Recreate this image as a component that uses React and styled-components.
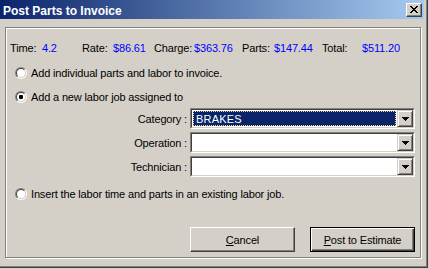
import React from 'react';
import styled, { createGlobalStyle } from 'styled-components';

const GlobalStyle = createGlobalStyle`
  html, body {
    margin: 0;
    padding: 0;
    background: #D4D0C8;
  }
  body {
    font-family: "Liberation Sans", Arial, sans-serif;
    font-size: 11px;
    letter-spacing: -0.15px;
    color: #000;
  }
`

const Window = styled.div`
  width: 424px;
  padding: 0 3px 3px 0;
  border-right: 1px solid #404040;
  border-bottom: 1px solid #404040;
  box-shadow: inset -1px -1px 0 #808080;
  background: #D4D0C8;
`

const TitleBar = styled.div`
  height: 19px;
  display: flex;
  align-items: center;
  justify-content: space-between;
  padding: 0 2px 0 3px;
  background: linear-gradient(to right, #0A246A, #A6CAF0);
  color: #fff;
  font-size: 12px;
  font-weight: bold;
  letter-spacing: 0;
`

const TitleText = styled.span`
  padding-top: 2px;
`

const CloseButton = styled.div`
  width: 16px;
  height: 14px;
  box-sizing: border-box;
  display: flex;
  align-items: center;
  justify-content: center;
  background: #D4D0C8;
  border: 1px solid;
  border-color: #fff #404040 #404040 #fff;
  box-shadow: inset -1px -1px 0 #808080;
`

const Body = styled.div`
  padding: 8px 3px 6px 5px;
`

const Frame = styled.div`
  display: flex;
  flex-direction: column;
  border: 1px solid #808080;
  box-shadow: inset 1px 1px 0 #fff, 1px 1px 0 #fff;
  padding: 14px 5px 5px 4px;
`

const Stats = styled.div`
  display: grid;
  grid-template-columns: 32px 40px 31px 41px 40px 48px 32px 48px 40px auto;
  height: 13px;
  line-height: 13px;
  white-space: nowrap;
`

const Value = styled.span`
  color: #0000FF;
`

const RadioRow = styled.div`
  display: flex;
  align-items: center;
  gap: 4px;
  height: 14px;
  padding-left: 5px;
  margin-top: ${p => p.$top}px;
  white-space: nowrap;
`

const RadioOuter = styled.div`
  width: 12px;
  height: 12px;
  box-sizing: border-box;
  border-radius: 50%;
  border: 1px solid;
  border-color: #808080 #fff #fff #808080;
  display: flex;
`

const RadioInner = styled.div`
  flex: 1;
  border-radius: 50%;
  border: 1px solid;
  border-color: #404040 #D4D0C8 #D4D0C8 #404040;
  background: #fff;
  display: flex;
  align-items: center;
  justify-content: center;
`

const Dot = styled.div`
  width: 4px;
  height: 4px;
  border-radius: 1px;
  background: #000;
`

const ComboGrid = styled.div`
  display: grid;
  grid-template-columns: 1fr 225px;
  column-gap: 3px;
  row-gap: 3px;
  margin-top: 4px;
  align-items: center;
`

const ComboLabel = styled.div`
  text-align: right;
  white-space: nowrap;
`

const Combo = styled.div`
  height: 21px;
  box-sizing: border-box;
  display: flex;
  border: 1px solid;
  border-color: #808080 #fff #fff #808080;
`

const ComboInner = styled.div`
  flex: 1;
  display: flex;
  border: 1px solid;
  border-color: #404040 #D4D0C8 #D4D0C8 #404040;
  background: #fff;
`

const ComboField = styled.div`
  flex: 1;
  display: flex;
  padding: 1px;
`

const Selection = styled.div`
  flex: 1;
  display: flex;
  align-items: center;
  padding-left: 2px;
  background: #0A246A;
  color: #fff;
  border: 1px dotted #F5DB95;
  letter-spacing: 0.2px;
`

const DropButton = styled.div`
  width: 16px;
  box-sizing: border-box;
  display: flex;
  align-items: center;
  justify-content: center;
  background: #D4D0C8;
  border: 1px solid;
  border-color: #D4D0C8 #404040 #404040 #D4D0C8;
  box-shadow: inset 1px 1px 0 #fff, inset -1px -1px 0 #808080;
`

const ButtonRow = styled.div`
  display: flex;
  justify-content: flex-end;
  gap: 15px;
  margin-top: 26px;
`

const Button = styled.div`
  width: 105px;
  height: 25px;
  box-sizing: border-box;
  display: flex;
  align-items: center;
  justify-content: center;
  background: #D4D0C8;
  border: 1px solid;
  border-color: ${p => p.$default ? '#000' : '#fff #404040 #404040 #fff'};
  box-shadow: ${p => p.$default
    ? 'inset 1px 1px 0 #fff, inset -1px -1px 0 #404040, inset -2px -2px 0 #808080'
    : 'inset -1px -1px 0 #808080'};
`

const CloseIcon = () => (
  <svg width="8" height="7" viewBox="0 0 8 7" shapeRendering="crispEdges">
    <path
      fill="#000"
      d="M0 0h2v1H0z M6 0h2v1H6z M1 1h2v1H1z M5 1h2v1H5z M2 2h4v1H2z M3 3h2v1H3z M2 4h4v1H2z M1 5h2v1H1z M5 5h2v1H5z M0 6h2v1H0z M6 6h2v1H6z"
    />
  </svg>
)

const ArrowIcon = () => (
  <svg width="7" height="4" viewBox="0 0 7 4" shapeRendering="crispEdges">
    <path fill="#000" d="M0 0h7v1H0z M1 1h5v1H1z M2 2h3v1H2z M3 3h1v1H3z" />
  </svg>
)

function Radio({ checked }) {
  return (
    <RadioOuter>
      <RadioInner>{checked && <Dot />}</RadioInner>
    </RadioOuter>
  )
}

function ComboBox({ value, selected }) {
  return (
    <Combo>
      <ComboInner>
        <ComboField>
          {selected && <Selection>{value}</Selection>}
        </ComboField>
        <DropButton>
          <ArrowIcon />
        </DropButton>
      </ComboInner>
    </Combo>
  )
}

const stats = [
  { label: 'Time:', value: '4.2' },
  { label: 'Rate:', value: '$86.61' },
  { label: 'Charge:', value: '$363.76' },
  { label: 'Parts:', value: '$147.44' },
  { label: 'Total:', value: '$511.20' },
]

const combos = [
  { label: 'Category :', value: 'BRAKES', selected: true },
  { label: 'Operation :', value: '' },
  { label: 'Technician :', value: '' },
]

export default function App() {
  return (
    <>
      <GlobalStyle />
      <Window>
        <TitleBar>
          <TitleText>Post Parts to Invoice</TitleText>
          <CloseButton>
            <CloseIcon />
          </CloseButton>
        </TitleBar>
        <Body>
          <Frame>
            <Stats>
              {stats.map(item => (
                <React.Fragment key={item.label}>
                  <span>{item.label}</span>
                  <Value>{item.value}</Value>
                </React.Fragment>
              ))}
            </Stats>

            <RadioRow $top={11}>
              <Radio />
              <span>Add individual parts and labor to invoice.</span>
            </RadioRow>

            <RadioRow $top={10}>
              <Radio checked />
              <span>Add a new labor job assigned to</span>
            </RadioRow>

            <ComboGrid>
              {combos.map(item => (
                <React.Fragment key={item.label}>
                  <ComboLabel>{item.label}</ComboLabel>
                  <ComboBox value={item.value} selected={item.selected} />
                </React.Fragment>
              ))}
            </ComboGrid>

            <RadioRow $top={10}>
              <Radio />
              <span>Insert the labor time and parts in an existing labor job.</span>
            </RadioRow>

            <ButtonRow>
              <Button><span><u>C</u>ancel</span></Button>
              <Button $default><span><u>P</u>ost to Estimate</span></Button>
            </ButtonRow>
          </Frame>
        </Body>
      </Window>
    </>
  )
}
